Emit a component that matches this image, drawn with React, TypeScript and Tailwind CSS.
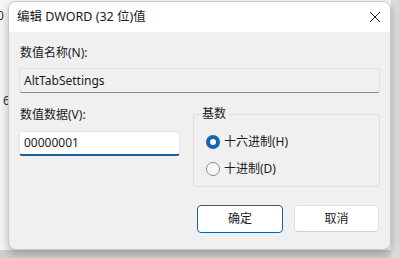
import React from "react";

const font = {
  fontFamily: '"Noto Sans", "Noto Sans CJK SC", sans-serif',
};

function CloseIcon() {
  return (
    <svg width="12" height="12" viewBox="0 0 12 12" fill="none">
      <path d="M1 1L11 11M11 1L1 11" stroke="#1f1f1f" strokeWidth="1" />
    </svg>
  );
}

function Radio({ checked, label }: { checked?: boolean; label: string }) {
  return (
    <div className="flex items-center gap-[4px] h-[20px]">
      {checked ? (
        <span className="w-[14px] h-[14px] rounded-full bg-[#1a63b0] flex items-center justify-center">
          <span className="w-[6px] h-[6px] rounded-full bg-white" />
        </span>
      ) : (
        <span className="w-[14px] h-[14px] rounded-full border border-[#8a8a8a] bg-[#f7f7f7]" />
      )}
      <span className="text-[12px] text-[#1b1b1b]">{label}</span>
    </div>
  );
}

export default function App() {
  return (
    <div
      className="relative w-[399px] h-[258px] overflow-hidden bg-[#f6f6f6]"
      style={font}
    >
      {/* background window fragments */}
      <span className="absolute left-[-3px] top-[7px] text-[12px] text-[#333]">0</span>
      <span className="absolute left-[3px] top-[92px] text-[12px] text-[#333]">6</span>
      <div className="absolute left-0 right-0 top-[250px] h-[8px] bg-[#cfcfcf]" />
      <div className="absolute right-0 top-0 bottom-0 w-[8px] bg-[#dcdcdc]" />

      <div className="relative ml-[8px] mt-[1px] w-[383px] h-[249px] rounded-[8px] border border-[#c9c9c9] bg-[#f0f0f0] shadow-[0_4px_10px_rgba(0,0,0,0.25)] overflow-hidden flex flex-col">
        {/* title bar */}
        <div className="h-[30px] bg-white flex items-center justify-between pl-[8px] pr-[9px] shrink-0">
          <span className="text-[12.5px] text-[#1b1b1b]">编辑 DWORD (32 位)值</span>
          <CloseIcon />
        </div>

        <div className="flex flex-col px-[10px]">
          <div className="mt-[13px] h-[16px] text-[12px] text-[#1b1b1b] leading-[16px] pl-[1px]">
            数值名称(N):
          </div>
          <div className="mt-[7px] h-[25px] border border-[#e2e2e2] border-b-[#8c8c8c] rounded-[3px] bg-[#f0f0f0] flex items-center pl-[4px] text-[12px] text-[#1b1b1b]">
            AltTabSettings
          </div>

          <div className="mt-[21px] flex justify-between">
            <div className="flex flex-col w-[161px]">
              <div className="h-[16px] text-[12px] leading-[16px] text-[#1b1b1b] pl-[1px] mt-[-7px]">
                数值数据(V):
              </div>
              <div className="mt-[8px] h-[25px] bg-white rounded-[3px] border border-[#e5e5e5] border-b-2 border-b-[#1b5f9e] flex items-center pl-[4px] text-[12px] text-[#1b1b1b]">
                00000001
              </div>
            </div>

            <div className="relative w-[187px] h-[73px] border border-[#dedede] rounded-[2px] flex flex-col pl-[12px] pt-[17px] gap-[7px]">
              <span className="absolute left-[6px] top-[-9px] px-[2px] bg-[#f0f0f0] text-[12px] leading-[16px] text-[#1b1b1b]">
                基数
              </span>
              <Radio checked label="十六进制(H)" />
              <Radio label="十进制(D)" />
            </div>
          </div>

          <div className="mt-[18px] flex justify-end gap-[11px] pr-[1px]">
            <button className="w-[86px] h-[28px] bg-white rounded-[4px] border border-[#1b5f9e] text-[12px] text-[#1b1b1b]">
              确定
            </button>
            <button className="w-[85px] h-[27px] bg-white rounded-[4px] border border-[#e0e0e0] border-b-[#cfcfcf] text-[12px] text-[#1b1b1b]">
              取消
            </button>
          </div>
        </div>
      </div>
    </div>
  );
}
